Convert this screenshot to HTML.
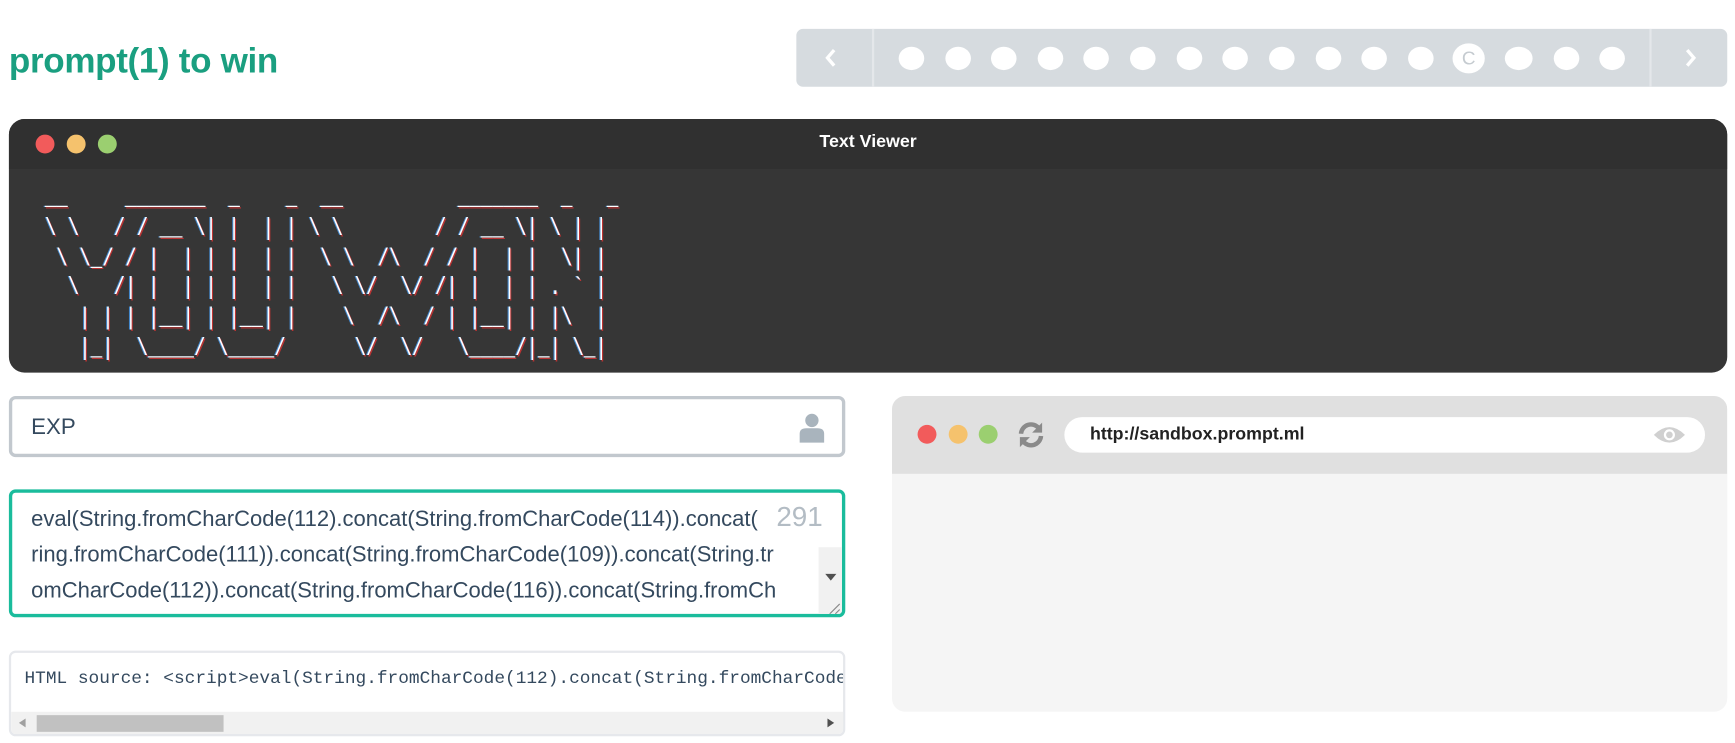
<!DOCTYPE html>
<html><head><meta charset="utf-8"><style>
*{box-sizing:border-box;margin:0;padding:0}
body{width:1735px;height:743px;background:#fff;font-family:"Liberation Sans",sans-serif;position:relative;overflow:hidden}
#wrap{position:absolute;left:0;top:0;width:1560px;height:668px;transform:scale(1.1122);transform-origin:0 0}
.abs{position:absolute}
h1{position:absolute;left:8px;top:36px;font-size:31.5px;font-weight:bold;color:#1a9f80;letter-spacing:-0.3px}
.pager{left:716px;top:26px;width:837px;height:52px;background:#d6dbdf;border-radius:6px}
.dot{position:absolute;top:16px;width:23px;height:21px;border-radius:50%;background:#fff}
.term{left:8px;top:107px;width:1545px;height:228px;background:#363636;border-radius:14px;overflow:hidden}
.thead{height:45px;background:#303030;position:relative}
.tl{position:absolute;width:17px;height:17px;border-radius:50%;top:14px}
pre{position:absolute;left:22px;top:60px;font-family:"Liberation Mono",monospace;font-size:17.2px;line-height:20.8px;color:#fff;text-shadow:1px 1px 0 #b33,-1px 0 0 #48c;transform:scaleY(1.3);transform-origin:0 0}
.box{border-radius:6px;background:#fff}
.ta{font-size:19.8px;color:#34495e;line-height:32px;white-space:nowrap;overflow:hidden}
</style></head><body><div id="wrap">
<h1>prompt(1) to win</h1>
<div class="abs pager">
 <div class="abs" style="left:68px;top:0;width:2px;height:52px;background:#e4e7ea"></div>
 <div class="abs" style="left:767px;top:0;width:2px;height:52px;background:#e4e7ea"></div>
 <svg class="abs" style="left:24px;top:17px" width="14" height="18"><path d="M10 2 L4 9 L10 16" stroke="#fff" stroke-width="3" fill="none"/></svg>
 <svg class="abs" style="left:797px;top:17px" width="14" height="18"><path d="M4 2 L10 9 L4 16" stroke="#fff" stroke-width="3" fill="none"/></svg>
 <div class="dot" style="left:92px"></div><div class="dot" style="left:134px"></div><div class="dot" style="left:175px"></div><div class="dot" style="left:217px"></div><div class="dot" style="left:258px"></div><div class="dot" style="left:300px"></div><div class="dot" style="left:342px"></div><div class="dot" style="left:383px"></div><div class="dot" style="left:425px"></div><div class="dot" style="left:467px"></div><div class="dot" style="left:508px"></div><div class="dot" style="left:550px"></div>
 <div class="dot" style="left:590px;top:13px;width:29px;height:27px;color:#c5cbd0;font-size:17px;text-align:center;line-height:27px">C</div>
 <div class="dot" style="left:637px;width:25px"></div><div class="dot" style="left:681px"></div><div class="dot" style="left:722px"></div>
</div>
<div class="abs term">
 <div class="thead">
  <div class="tl" style="left:24px;background:#f25b5b"></div>
  <div class="tl" style="left:52px;background:#f5c26d"></div>
  <div class="tl" style="left:80px;background:#9bcf70"></div>
  <div style="text-align:center;color:#fff;font-weight:bold;font-size:16px;line-height:42px">Text Viewer</div>
 </div>
<pre> __     _______  _    _  __          _______  _   _
 \ \   / / __ \| |  | | \ \        / / __ \| \ | |
  \ \_/ / |  | | |  | |  \ \  /\  / / |  | |  \| |
   \   /| |  | | |  | |   \ \/  \/ /| |  | | . ` |
    | | | |__| | |__| |    \  /\  / | |__| | |\  |
    |_|  \____/ \____/      \/  \/   \____/|_| \_|</pre>
</div>
<div class="abs box" style="left:8px;top:356px;width:752px;height:55px;border:3px solid #c2c8ce">
 <div class="abs" style="left:17px;top:14px;font-size:20px;color:#34495e">EXP</div>
 <svg class="abs" style="left:706px;top:12px" width="26" height="28"><circle cx="13" cy="7" r="6" fill="#a9b4bd"/><path d="M2 27 L2 19 Q2 14 8 14 L18 14 Q24 14 24 19 L24 27 Z" fill="#a9b4bd"/></svg>
</div>
<div class="abs box ta" style="left:8px;top:440px;width:752px;height:115px;border:3px solid #1abc9c;padding:8px 0 0 17px">
eval(String.fromCharCode(112).concat(String.fromCharCode(114)).concat(<br>ring.fromCharCode(111)).concat(String.fromCharCode(109)).concat(String.tr<br>omCharCode(112)).concat(String.fromCharCode(116)).concat(String.fromCh<br>arCode(40)).concat(String.fromCharCode(49)).concat(String.fromCharCode(4
 <div class="abs" style="left:683px;top:6px;font-size:25px;color:#b3bcc4;background:#fff;padding:0 4px">291</div>
 <div class="abs" style="left:725px;top:49px;width:22px;height:63px;background:#f1f1f1"></div>
 <svg class="abs" style="left:730px;top:72px" width="12" height="8"><path d="M1 1 L11 1 L6 7Z" fill="#505050"/></svg>
 <svg class="abs" style="left:733px;top:98px" width="12" height="12"><path d="M11 2 L2 11 M11 7 L7 11" stroke="#888" stroke-width="1"/></svg>
</div>
<div class="abs box" style="left:8px;top:585px;width:752px;height:77px;border:2px solid #e6e8ec;overflow:hidden">
 <div class="abs" style="left:12px;top:14px;font-family:'Liberation Mono',monospace;font-size:16px;color:#34495e;white-space:nowrap">HTML source: &lt;script&gt;eval(String.fromCharCode(112).concat(String.fromCharCode</div>
 <div class="abs" style="left:0;top:53px;width:750px;height:20px;background:#f1f1f1"></div>
 <div class="abs" style="left:23px;top:56px;width:168px;height:15px;background:#c1c1c1"></div>
 <svg class="abs" style="left:6px;top:58px" width="8" height="10"><path d="M7 1 L1 5 L7 9Z" fill="#a0a0a0"/></svg>
 <svg class="abs" style="left:733px;top:58px" width="8" height="10"><path d="M1 1 L7 5 L1 9Z" fill="#505050"/></svg>
</div>
<div class="abs" style="left:802px;top:356px;width:751px;height:284px;background:#f5f5f5;border-radius:12px;overflow:hidden">
 <div style="height:70px;background:#e0e0e0;position:relative">
  <div class="tl" style="left:23px;top:26px;background:#f25b5b"></div>
  <div class="tl" style="left:51px;top:26px;background:#f5c26d"></div>
  <div class="tl" style="left:78px;top:26px;background:#9bcf70"></div>
  <svg class="abs" style="left:111px;top:21px" width="28" height="28" viewBox="0 0 28 28"><path d="M5 13 A9 9 0 0 1 21 8" stroke="#8a8a8a" stroke-width="4" fill="none"/><path d="M24 3 L24 12 L15 12Z" fill="#8a8a8a"/><path d="M23 15 A9 9 0 0 1 7 20" stroke="#8a8a8a" stroke-width="4" fill="none"/><path d="M4 25 L4 16 L13 16Z" fill="#8a8a8a"/></svg>
  <div class="abs" style="left:155px;top:19px;width:576px;height:32px;background:#fff;border-radius:16px">
   <div class="abs" style="left:23px;top:7px;font-size:16px;font-weight:bold;color:#222">http://sandbox.prompt.ml</div>
   <svg class="abs" style="left:528px;top:6px" width="32" height="20"><path d="M2 10 Q16 -4 30 10 Q16 24 2 10Z" fill="#d0d0d0"/><circle cx="16" cy="10" r="5" fill="#fff"/><circle cx="16" cy="10" r="3" fill="#d0d0d0"/></svg>
  </div>
 </div>
</div>
</div></body></html>
